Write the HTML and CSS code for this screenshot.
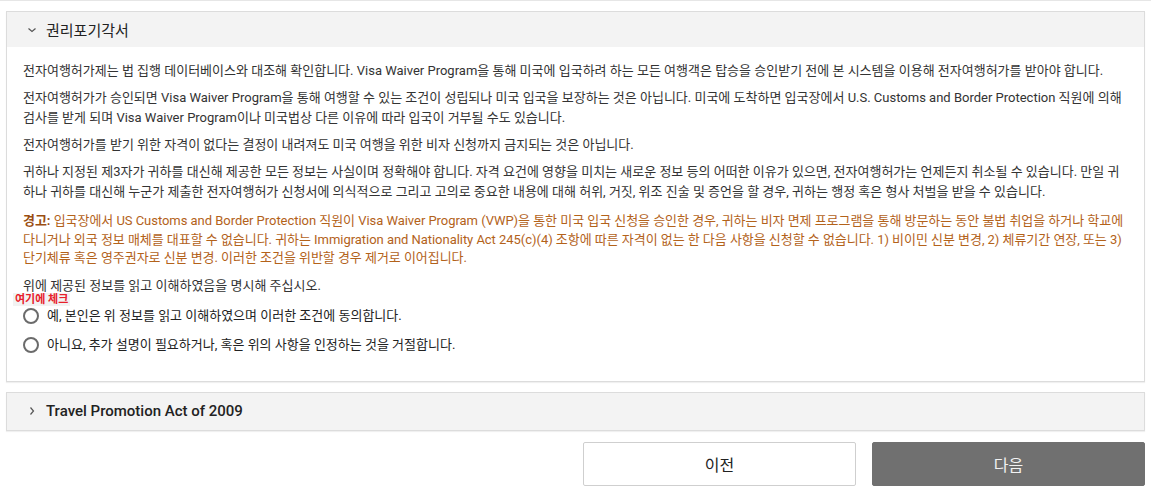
FILE: index.html
```html
<!DOCTYPE html>
<html lang="ko">
  <head>
    <meta charset="UTF-8" />
    <meta name="viewport" content="width=device-width, initial-scale=1.0" />
    <title>권리포기각서</title>
    <link rel="stylesheet" href="styles.css">
  </head>
  <body>
    <div id="page">
      <div class="panel">
        <div class="panel-head">
          <svg class="chev" width="10" height="10" viewBox="0 0 10 10">
            <path d="M1.5 3.5 L5 6.5 L8.5 3.5" fill="none" stroke="#555" stroke-width="1.2" />
          </svg>
          <span class="panel-title">권리포기각서</span>
        </div>
        <div class="panel-body">
          <p>전자여행허가제는 법 집행 데이터베이스와 대조해 확인합니다. Visa Waiver Program을 통해 미국에 입국하려 하는 모든 여행객은 탑승을 승인받기 전에 본 시스템을 이용해 전자여행허가를 받아야 합니다.</p>
          <p>전자여행허가가 승인되면 Visa Waiver Program을 통해 여행할 수 있는 조건이 성립되나 미국 입국을 보장하는 것은 아닙니다. 미국에 도착하면 입국장에서 U.S. Customs and Border Protection 직원에 의해 검사를 받게 되며 Visa Waiver Program이나 미국법상 다른 이유에 따라 입국이 거부될 수도 있습니다.</p>
          <p>전자여행허가를 받기 위한 자격이 없다는 결정이 내려져도 미국 여행을 위한 비자 신청까지 금지되는 것은 아닙니다.</p>
          <p>귀하나 지정된 제3자가 귀하를 대신해 제공한 모든 정보는 사실이며 정확해야 합니다. 자격 요건에 영향을 미치는 새로운 정보 등의 어떠한 이유가 있으면, 전자여행허가는 언제든지 취소될 수 있습니다. 만일 귀하나 귀하를 대신해 누군가 제출한 전자여행허가 신청서에 의식적으로 그리고 고의로 중요한 내용에 대해 허위, 거짓, 위조 진술 및 증언을 할 경우, 귀하는 행정 혹은 형사 처벌을 받을 수 있습니다.</p>
          <p class="warn"><b>경고:</b> 입국장에서 US Customs and Border Protection 직원이 Visa Waiver Program (VWP)을 통한 미국 입국 신청을 승인한 경우, 귀하는 비자 면제 프로그램을 통해 방문하는 동안 불법 취업을 하거나 학교에 다니거나 외국 정보 매체를 대표할 수 없습니다. 귀하는 Immigration and Nationality Act 245(c)(4) 조항에 따른 자격이 없는 한 다음 사항을 신청할 수 없습니다. 1) 비이민 신분 변경, 2) 체류기간 연장, 또는 3) 단기체류 혹은 영주권자로 신분 변경. 이러한 조건을 위반할 경우 제거로 이어집니다.</p>
          <p class="ask">위에 제공된 정보를 읽고 이해하였음을 명시해 주십시오.</p>
          <div class="hint">여기에 체크</div>
          <label class="choice"><span class="radio"></span>예, 본인은 위 정보를 읽고 이해하였으며 이러한 조건에 동의합니다.</label>
          <label class="choice"><span class="radio"></span>아니요, 추가 설명이 필요하거나, 혹은 위의 사항을 인정하는 것을 거절합니다.</label>
        </div>
      </div>

      <div class="panel closed">
        <div class="panel-head">
          <svg class="chev" width="10" height="10" viewBox="0 0 10 10">
            <path d="M3.5 1.5 L6.5 5 L3.5 8.5" fill="none" stroke="#555" stroke-width="1.2" />
          </svg>
          <span class="panel-title bold">Travel Promotion Act of 2009</span>
        </div>
      </div>

      <div class="actions">
        <button class="btn prev">이전</button>
        <button class="btn next">다음</button>
      </div>
    </div>
  </body>
</html>
```

FILE: styles.css
```css
body {
  margin: 0;
  padding: 0;
  font-family: Roboto, "Noto Sans CJK KR", sans-serif;
  font-feature-settings: "palt";
  color: #333;
  background: #fff;
  border-top: 1px solid #e6e6e6;
}

#page {
  padding: 10px 6px 0 6px;
}

.panel {
  border: 1px solid #dcdcdc;
  background: #fff;
  box-shadow: 0 1px 1px rgba(0, 0, 0, 0.06);
}

.panel-head {
  display: flex;
  align-items: center;
  height: 35px;
  background: #f3f3f3;
  padding-left: 20px;
}

.chev {
  margin-right: 9px;
}

.panel-title {
  font-size: 15px;
  color: #222;
}

.panel-title.bold {
  font-weight: 500;
}

.panel-body {
  padding: 14px 16px 26px 16px;
  font-size: 13px;
  line-height: 20px;
}

.panel-body p {
  margin: 0 0 7px 0;
}

.panel-body .warn {
  color: #b3621a;
  line-height: 18.5px;
  letter-spacing: -0.04px;
  margin-top: 10px;
  margin-bottom: 8px;
}

.warn b {
  font-weight: 700;
  color: #9a4e12;
}

.panel-body .ask {
  margin-bottom: 0;
}

.hint {
  width: fit-content;
  margin: -3px 0 0 -10px;
  padding: 0 2px;
  background: #f2f2f2;
  color: #e8202a;
  font-size: 11px;
  font-weight: 700;
  line-height: 13px;
}

.choice {
  display: flex;
  align-items: center;
  height: 20px;
  margin-bottom: 9px;
  color: #222;
}

.choice:last-child {
  margin-bottom: 0;
}

.radio {
  width: 12px;
  height: 12px;
  border: 2px solid #6b6b6b;
  border-radius: 50%;
  margin-right: 8px;
}

.closed {
  margin-top: 10px;
}

.closed .panel-head {
  height: 37px;
}

.actions {
  display: flex;
  justify-content: flex-end;
  gap: 16px;
  margin-top: 11px;
}

.btn {
  width: 273px;
  height: 44px;
  font-family: Roboto, "Noto Sans CJK KR", sans-serif;
  font-size: 16px;
  border-radius: 2px;
  cursor: pointer;
}

.prev {
  background: #fff;
  border: 1px solid #cfcfcf;
  color: #222;
}

.next {
  background: #707070;
  border: 1px solid #707070;
  color: #f2f2f2;
}
```
